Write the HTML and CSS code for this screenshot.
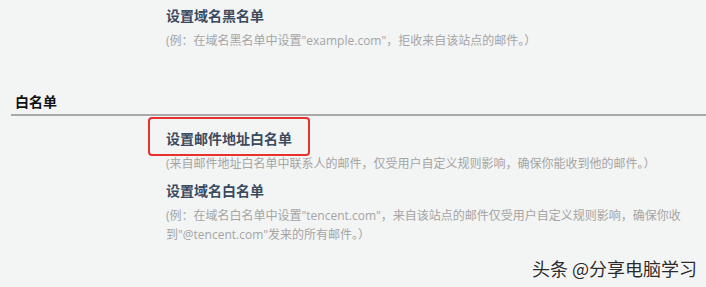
FILE: index.html
```html
<!DOCTYPE html>
<html lang="zh-CN">
<head>
<meta charset="utf-8">
<title>白名单设置</title>
<link rel="stylesheet" href="styles.css">
</head>
<body>
<div class="page">
  <div class="items">
    <div class="item">
      <div class="title">设置域名黑名单</div>
      <div class="desc">(例：在域名黑名单中设置"example.com"，拒收来自该站点的邮件。）</div>
    </div>
  </div>

  <div class="section-head">白名单</div>

  <div class="items">
    <div class="item">
      <div class="title highlighted">设置邮件地址白名单</div>
      <div class="desc">(来自邮件地址白名单中联系人的邮件，仅受用户自定义规则影响，确保你能收到他的邮件。）</div>
    </div>
    <div class="item">
      <div class="title">设置域名白名单</div>
      <div class="desc">(例：在域名白名单中设置"tencent.com"，来自该站点的邮件仅受用户自定义规则影响，确保你收到"@tencent.com"发来的所有邮件。）</div>
    </div>
  </div>

  <div class="watermark">头条 @分享电脑学习</div>
</div>
</body>
</html>
```
FILE: styles.css
```css
html, body {
  margin: 0;
  padding: 0;
}
body {
  background: #f3f4f4;
  font-family: "Open Sans", "Noto Sans CJK SC", sans-serif;
  width: 706px;
  height: 287px;
  overflow: hidden;
}
.page {
  position: relative;
  height: 287px;
  padding-top: 5px;
  box-sizing: border-box;
}
.items {
  display: flex;
  flex-direction: column;
  gap: 7px;
  padding-left: 166px;
  padding-right: 12px;
}
.item {
  display: flex;
  flex-direction: column;
  align-items: flex-start;
  gap: 6px;
}
.title {
  font-family: "Noto Sans CJK SC", sans-serif;
  font-size: 14px;
  line-height: 20px;
  font-weight: 700;
  color: #3a4a5f;
}
.desc {
  font-size: 12px;
  line-height: 19px;
  color: #a5a5a5;
}
.section-head {
  margin: 41px 0 12px 11px;
  padding: 0 0 3px 4px;
  border-bottom: 2px solid #a9a9a9;
  font-family: "Noto Sans CJK SC", sans-serif;
  font-size: 14px;
  line-height: 20px;
  font-weight: 700;
  color: #111;
}
.highlighted {
  position: relative;
}
.highlighted::after {
  content: "";
  position: absolute;
  top: -11px;
  bottom: -8px;
  left: -18px;
  right: -18px;
  border: 2px solid #e8302c;
  border-radius: 4px;
}
.watermark {
  position: absolute;
  right: 9px;
  bottom: 8px;
  font-family: "Noto Sans CJK SC", sans-serif;
  font-size: 18px;
  line-height: 22px;
  color: #2b2b2b;
  text-shadow: 0 0 2px #fff, 0 0 1px #fff;
}
```
